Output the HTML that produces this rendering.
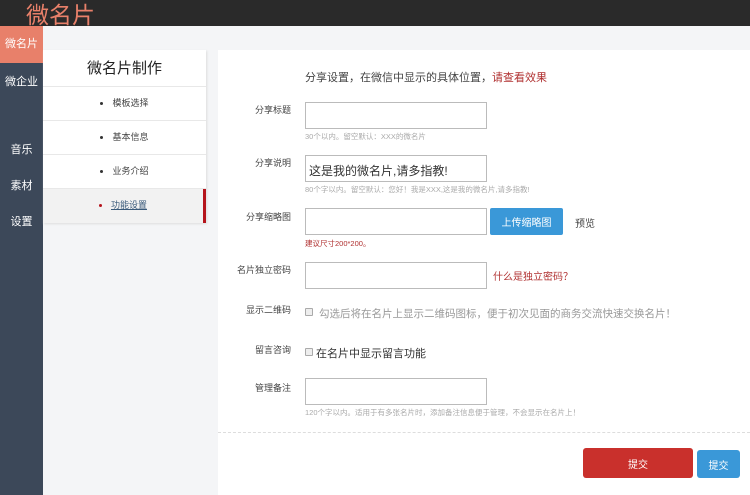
<!DOCTYPE html>
<html><head><meta charset="utf-8"><style>
*{margin:0;padding:0;box-sizing:border-box}
body{width:750px;height:495px;overflow:hidden;background:#f4f5f7;font-family:"Liberation Sans","Noto Sans CJK SC",sans-serif;position:relative;color:#333}
.top{position:absolute;left:0;top:0;width:750px;height:26px;background:#2a2a2a}
.top span{position:absolute;left:26px;top:-4px;font-size:23px;color:#e8806a}
.side{position:absolute;left:0;top:26px;width:43px;height:469px;background:#3c4859}
.side div{position:absolute;left:0;width:43px;text-align:center;color:#fff;font-size:11px}
.lp{position:absolute;left:43px;top:50px;width:163px;height:173px;background:#fff;box-shadow:1px 1px 2px #ddd}
.lp .h{height:37px;line-height:38px;text-align:center;font-size:15px;color:#222;border-bottom:1px solid #e8e8e8}
.lp .i{height:34px;line-height:33px;text-align:center;font-size:9px;color:#444;border-bottom:1px solid #e8e8e8}
.lp .i b{display:inline-block;width:3px;height:3px;border-radius:2px;background:#333;vertical-align:middle;margin-right:9px}
.lp .a{background:#f2f2f2;border-right:3px solid #b5141c}
.lp .a b{background:#b5141c}
.lp .a u{color:#3a5a7a}
.rp{position:absolute;left:218px;top:50px;width:532px;height:445px;background:#fff}
.l{position:absolute;width:80px;text-align:right;font-size:9px;color:#444;left:-7px}
.in{position:absolute;left:87px;width:182px;height:27px;border:1px solid #bbb;background:#fff;font-size:12px;padding:6px 3px;color:#333}
.t{position:absolute;font-size:7.5px;color:#aaa;left:87px}
.btn{position:absolute;display:flex;align-items:center;justify-content:center;color:#fff;font-size:10px;border-radius:3px}
</style></head><body>
<div class="top"><span>微名片</span></div>
<div class="side">
<div style="top:0;height:37px;line-height:37px;background:#e8806a">微名片</div>
<div style="top:47px">微企业</div>
<div style="top:115px">音乐</div>
<div style="top:151px">素材</div>
<div style="top:187px">设置</div>
</div>
<div class="lp">
<div class="h">微名片制作</div>
<div class="i"><b></b>模板选择</div>
<div class="i"><b></b>基本信息</div>
<div class="i"><b></b>业务介绍</div>
<div class="i a" style="border-bottom:none"><b></b><u>功能设置</u></div>
</div>
<div class="rp">
<div style="position:absolute;left:87px;top:19px;font-size:11px;color:#444">分享设置，在微信中显示的具体位置，<span style="color:#b03030">请查看效果</span></div>
<div class="l" style="top:53px">分享标题</div>
<div class="in" style="top:52px"></div>
<div class="t" style="top:81px">30个以内。留空默认：XXX的微名片</div>
<div class="l" style="top:106px">分享说明</div>
<div class="in" style="top:105px">这是我的微名片,请多指教!</div>
<div class="t" style="top:134px">80个字以内。留空默认：您好！我是XXX,这是我的微名片,请多指教!</div>
<div class="l" style="top:160px">分享缩略图</div>
<div class="in" style="top:158px"></div>
<div class="btn" style="left:272px;top:158px;width:73px;height:27px;background:#3a98d8;border-radius:2px">上传缩略图</div>
<div style="position:absolute;left:357px;top:165px;font-size:10px;color:#444">预览</div>
<div class="t" style="top:188px;color:#b03030">建议尺寸200*200。</div>
<div class="l" style="top:213px">名片独立密码</div>
<div class="in" style="top:212px"></div>
<div style="position:absolute;left:275px;top:218px;font-size:10px;color:#b03030">什么是独立密码？</div>
<div class="l" style="top:253px">显示二维码</div>
<div style="position:absolute;left:87px;top:258px;width:8px;height:8px;border:1px solid #aaa;border-radius:1px;background:#eee"></div>
<div style="position:absolute;left:101px;top:256px;font-size:10.5px;color:#999">勾选后将在名片上显示二维码图标，便于初次见面的商务交流快速交换名片！</div>
<div class="l" style="top:293px">留言咨询</div>
<div style="position:absolute;left:87px;top:298px;width:8px;height:8px;border:1px solid #aaa;border-radius:1px;background:#eee"></div>
<div style="position:absolute;left:98px;top:295px;font-size:11px;color:#333">在名片中显示留言功能</div>
<div class="l" style="top:331px">管理备注</div>
<div class="in" style="top:328px"></div>
<div class="t" style="top:357px">120个字以内。适用于有多张名片时，添加备注信息便于管理，不会显示在名片上！</div>
<div style="position:absolute;left:0;top:382px;width:532px;border-top:1px dashed #ddd"></div>
<div class="btn" style="left:365px;top:398px;width:110px;height:30px;background:#c9302c">提交</div>
<div class="btn" style="left:479px;top:400px;width:43px;height:28px;background:#3a98d8">提交</div>
</div>
</body></html>
